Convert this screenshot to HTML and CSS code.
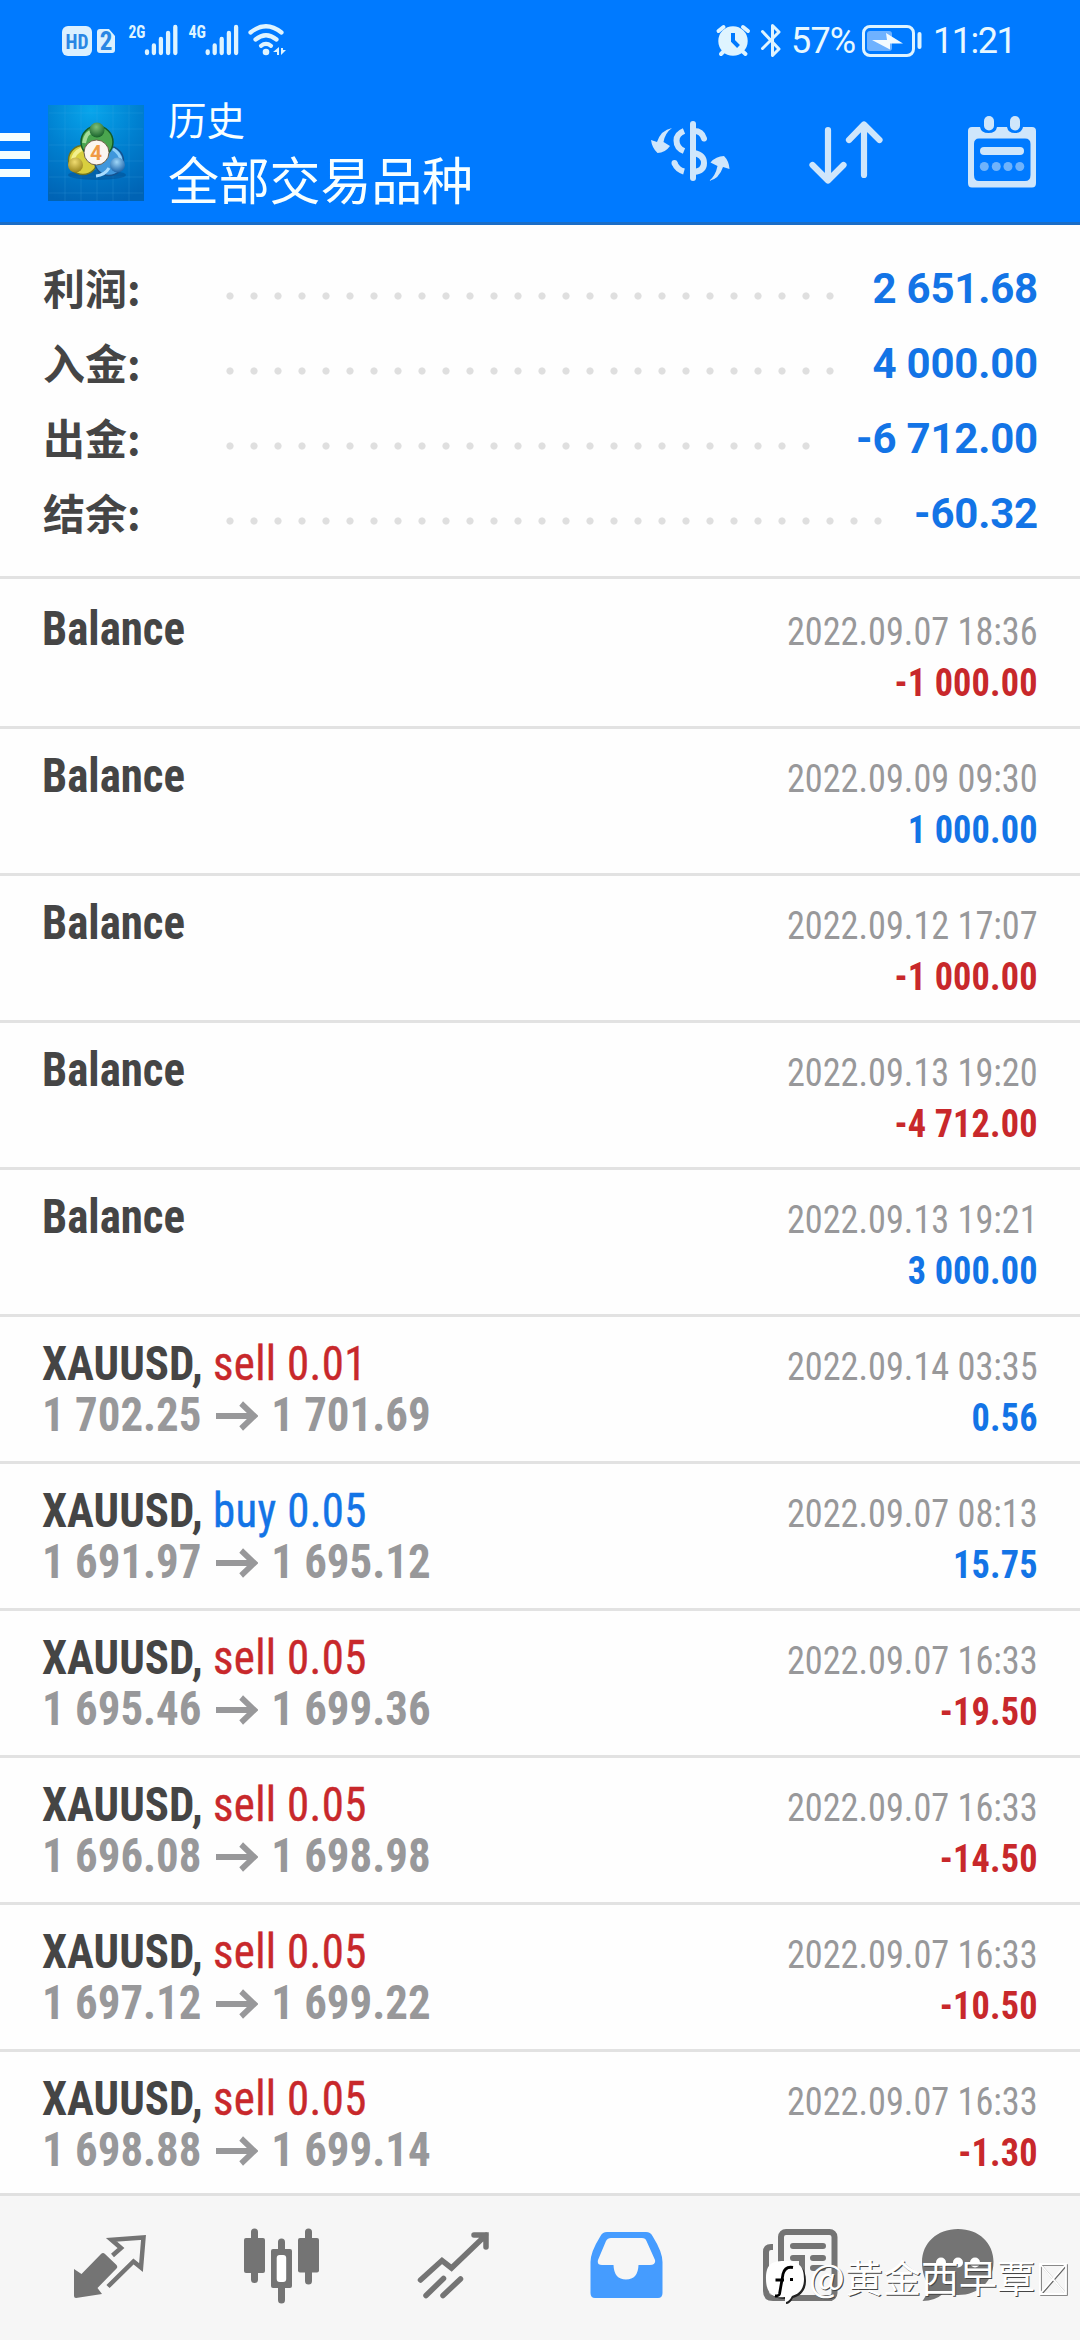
FILE: index.html
```html
<!DOCTYPE html>
<html lang="zh-CN">
<head>
<meta charset="utf-8">
<title>历史</title>
<link rel="stylesheet" href="styles.css">
</head>
<body>
<svg width="0" height="0" class="defs">
  <symbol id="arrow" viewBox="0 0 45 30"><path d="M0 15H41M27 2.500L41 15L27 27.500" fill="none" stroke="currentColor" stroke-width="6"/></symbol>
</svg>
<div class="screen">
  <header class="header">
    <div class="status">
      <svg class="status-left" width="240" height="40" viewBox="60 20 240 40">
        <rect x="62" y="26" width="30" height="30" rx="6" fill="#dbf0ff"/>
        <text x="77" y="48.500" class="badge-hd" text-anchor="middle" textLength="23" lengthAdjust="spacingAndGlyphs">HD</text>
        <path d="M100 29H109L115 36V50Q115 53 112 53H100Q97 53 97 50V32Q97 29 100 29Z" fill="#dbf0ff"/>
        <text x="106" y="49.500" class="badge-2" text-anchor="middle">2</text>
        <text x="128.500" y="38" class="net" textLength="17" lengthAdjust="spacingAndGlyphs">2G</text>
        <text x="188.500" y="38" class="net" textLength="17.500" lengthAdjust="spacingAndGlyphs">4G</text>
        <g stroke="#dff4ff" stroke-width="4.300" stroke-linecap="round">
          <path d="M147 51.500V53M153.900 45.500V53M160.900 39V53M168.100 33V53M175.300 27V53"/>
          <path d="M207.700 51.500V53M214.700 45.500V53M221.700 39V53M228.900 33V53M236.100 27V53"/>
        </g>
        <g fill="none" stroke="#dff4ff" stroke-width="4.200" stroke-linecap="round">
          <path d="M250.500 32.500Q266 20 281.500 32.500"/>
          <path d="M255.500 39.500Q266 31 276.500 39.500"/>
          <path d="M261 45.800Q266 42 271 45.800"/>
        </g>
        <circle cx="266" cy="52" r="3.300" fill="#dff4ff"/>
        <path d="M273 52L279 47V55H277V52ZM281 48V55L286 50H283V48Z" fill="#dff4ff"/>
      </svg>
      <div class="status-right">
        <svg width="79" height="40" viewBox="711 20 79 40">
          <circle cx="733" cy="41" r="14.700" fill="#dff4ff"/>
          <path d="M718.500 31L723.500 27M748 31L743 27M721 54L725 50M745.500 54L741 50" stroke="#dff4ff" stroke-width="4" stroke-linecap="round"/>
          <path d="M733 33V41L738.500 46.500" fill="none" stroke="#007aff" stroke-width="4"/>
          <path d="M762.500 31.500L779 49L772.500 55.500V25.500L779 32L762.500 48.500" fill="none" stroke="#dff4ff" stroke-width="3" stroke-linecap="round" stroke-linejoin="round"/>
        </svg>
        <span class="percent">57%</span>
        <svg width="62" height="40" viewBox="861 20 62 40">
          <rect x="863.500" y="26.500" width="50" height="29" rx="6.500" fill="none" stroke="#dff4ff" stroke-width="3"/>
          <rect x="867" y="31" width="25" height="20" rx="3" fill="#6fb2ff"/>
          <path d="M872 40L887 40L886 33L903 43.500H890V49.500Z" fill="#f4fbff"/>
          <path d="M919.500 34V47" stroke="#dff4ff" stroke-width="4" stroke-linecap="round"/>
        </svg>
        <span class="clock">11:21</span>
      </div>
    </div>
    <div class="toolbar">
      <div class="burger"><i></i><i></i><i></i></div>
      <svg class="logo" width="96" height="96" viewBox="0 0 96 96">
        <defs>
          <radialGradient id="bg" cx=".45" cy=".05" r="1"><stop offset="0" stop-color="#08a6ec"/><stop offset=".5" stop-color="#0080d0"/><stop offset="1" stop-color="#0063b4"/></radialGradient>
          <radialGradient id="gr" cx=".45" cy=".3" r=".7"><stop offset="0" stop-color="#7fc07a"/><stop offset="1" stop-color="#17622a"/></radialGradient>
          <radialGradient id="ye" cx=".45" cy=".3" r=".7"><stop offset="0" stop-color="#f0dc70"/><stop offset="1" stop-color="#98841a"/></radialGradient>
          <radialGradient id="bl" cx=".45" cy=".3" r=".7"><stop offset="0" stop-color="#9fd6f8"/><stop offset="1" stop-color="#1a63aa"/></radialGradient>
        </defs>
        <rect width="96" height="96" fill="url(#bg)"/>
        <path d="M1 8H95M1 24H95M1 40H95M1 56H95M1 72H95M1 88H95M17 0V96M33 0V96M49 0V96M65 0V96M81 0V96" stroke="#4fb4ea" stroke-opacity=".18"/>
        <ellipse cx="49" cy="70" rx="29" ry="5" fill="#003c78" opacity=".35"/>
        <circle cx="35" cy="55" r="14.500" fill="#d8cf3e" stroke="#6d7420" stroke-width="1.500"/>
        <circle cx="61" cy="56" r="14.500" fill="#3f97dc" stroke="#15528f" stroke-width="1.500"/>
        <path d="M48 71Q57 70 61 63" fill="none" stroke="#a8dcff" stroke-width="3"/>
        <path d="M25 56Q25 48 34 44" fill="none" stroke="#f3f08c" stroke-width="4"/>
        <circle cx="49" cy="37" r="16" fill="#4aa54e" stroke="#145c28" stroke-width="1.500"/>
        <path d="M36 38Q38 27 44 27" fill="none" stroke="#a5dc9a" stroke-width="4"/>
        <path d="M73 56Q72 48 65 44" fill="none" stroke="#8fd0fa" stroke-width="3"/>
        <circle cx="49" cy="25" r="7.500" fill="url(#gr)"/>
        <circle cx="27.500" cy="60" r="7.500" fill="url(#ye)"/>
        <circle cx="69.500" cy="60" r="7.500" fill="url(#bl)"/>
        <circle cx="48.500" cy="47.500" r="12.500" fill="#fbf5f0" stroke="#6d6048"/>
        <text x="48" y="55" class="logo-four" text-anchor="middle">4</text>
      </svg>
      <div class="titles">
        <div class="title-small">历史</div>
        <div class="title-big">全部交易品种</div>
      </div>
      <svg class="action" width="84" height="84" viewBox="648 110 84 84">
        <g fill="none" stroke="#cfe6fb" stroke-width="6">
          <path d="M693 124V178" stroke-linecap="round"/>
          <path d="M694 131Q702 131 704 138.500" stroke-linecap="round"/>
          <path d="M684 131Q676.500 134 676.500 140.500Q676.500 148 684 151"/>
          <path d="M674.500 163Q677 169.500 684 171.500"/>
          <path d="M694 153Q704 155 704 163Q704 171 694 172"/>
        </g>
        <circle cx="674.500" cy="163" r="3" fill="#cfe6fb"/>
        <path d="M672 128Q665 133 663.500 142L670 146Q665 153 657.500 153Q652 148 651 140L657 142Q661 130 672 128Z" fill="#cfe6fb"/>
        <path d="M709 181Q715.500 176 717.500 166L710.500 162.500Q716 156 724 156Q729 161 729.500 169L723 167Q719 179 709 181Z" fill="#cfe6fb"/>
      </svg>
      <svg class="action sort" width="84" height="84" viewBox="804 110 84 84">
        <path d="M828 130V180M812.500 165L828 180.500L843.500 165M864 175V125M849 140L864 124.500L879.500 140" fill="none" stroke="#cfe6fb" stroke-width="6.200" stroke-linecap="round" stroke-linejoin="round"/>
      </svg>
      <svg class="action calendar" width="84" height="84" viewBox="960 110 84 84">
        <path fill-rule="evenodd" d="M972 127H980Q981 133 988.500 133Q996 133 997 127H1007Q1008 133 1015 133Q1022 133 1023 127H1032Q1036 127 1036 131V183Q1036 187.500 1032 187.500H972Q968 187.500 968 183V131Q968 127 972 127ZM979 138.500Q974 138.500 974 144V175Q974 181 979 181H1025Q1030.500 181 1030.500 175V144Q1030.500 138.500 1025 138.500Z" fill="#cfe6fb"/>
        <rect x="984" y="116" width="10" height="14.500" rx="5" fill="#cfe6fb"/><rect x="1010" y="116" width="10" height="14.500" rx="5" fill="#cfe6fb"/>
        <rect x="980" y="147" width="44" height="8" rx="4" fill="#cfe6fb"/>
        <g fill="#6fb3fb"><circle cx="984.300" cy="166.500" r="4.500"/><circle cx="996.300" cy="166.500" r="4.500"/><circle cx="1008" cy="166.500" r="4.500"/><circle cx="1019.800" cy="166.500" r="4.500"/></g>
      </svg>
    </div>
  </header>

  <section class="summary">
    <div class="sum-row"><span class="sum-label">利润:</span><span class="dots" style="width:624px"></span><span class="sum-value">2 651.68</span></div>
    <div class="sum-row"><span class="sum-label">入金:</span><span class="dots" style="width:624px"></span><span class="sum-value">4 000.00</span></div>
    <div class="sum-row"><span class="sum-label">出金:</span><span class="dots" style="width:600px"></span><span class="sum-value">-6 712.00</span></div>
    <div class="sum-row"><span class="sum-label">结余:</span><span class="dots" style="width:672px"></span><span class="sum-value">-60.32</span></div>
  </section>

  <main class="deals">
    <div class="deal"><div class="left"><div>Balance</div></div><div class="right"><div class="date">2022.09.07 18:36</div><div class="amount neg">-1 000.00</div></div></div>
    <div class="deal"><div class="left"><div>Balance</div></div><div class="right"><div class="date">2022.09.09 09:30</div><div class="amount pos">1 000.00</div></div></div>
    <div class="deal"><div class="left"><div>Balance</div></div><div class="right"><div class="date">2022.09.12 17:07</div><div class="amount neg">-1 000.00</div></div></div>
    <div class="deal"><div class="left"><div>Balance</div></div><div class="right"><div class="date">2022.09.13 19:20</div><div class="amount neg">-4 712.00</div></div></div>
    <div class="deal"><div class="left"><div>Balance</div></div><div class="right"><div class="date">2022.09.13 19:21</div><div class="amount pos">3 000.00</div></div></div>
    <div class="deal"><div class="left"><div>XAUUSD, <span class="side neg">sell 0.01</span></div><div class="price">1 702.25<svg class="arrow"><use href="#arrow"/></svg>1 701.69</div></div><div class="right"><div class="date">2022.09.14 03:35</div><div class="amount pos">0.56</div></div></div>
    <div class="deal"><div class="left"><div>XAUUSD, <span class="side pos">buy 0.05</span></div><div class="price">1 691.97<svg class="arrow"><use href="#arrow"/></svg>1 695.12</div></div><div class="right"><div class="date">2022.09.07 08:13</div><div class="amount pos">15.75</div></div></div>
    <div class="deal"><div class="left"><div>XAUUSD, <span class="side neg">sell 0.05</span></div><div class="price">1 695.46<svg class="arrow"><use href="#arrow"/></svg>1 699.36</div></div><div class="right"><div class="date">2022.09.07 16:33</div><div class="amount neg">-19.50</div></div></div>
    <div class="deal"><div class="left"><div>XAUUSD, <span class="side neg">sell 0.05</span></div><div class="price">1 696.08<svg class="arrow"><use href="#arrow"/></svg>1 698.98</div></div><div class="right"><div class="date">2022.09.07 16:33</div><div class="amount neg">-14.50</div></div></div>
    <div class="deal"><div class="left"><div>XAUUSD, <span class="side neg">sell 0.05</span></div><div class="price">1 697.12<svg class="arrow"><use href="#arrow"/></svg>1 699.22</div></div><div class="right"><div class="date">2022.09.07 16:33</div><div class="amount neg">-10.50</div></div></div>
    <div class="deal"><div class="left"><div>XAUUSD, <span class="side neg">sell 0.05</span></div><div class="price">1 698.88<svg class="arrow"><use href="#arrow"/></svg>1 699.14</div></div><div class="right"><div class="date">2022.09.07 16:33</div><div class="amount neg">-1.30</div></div></div>
  </main>

  <nav class="tabs">
    <svg viewBox="24 2196 172 144">
      <path d="M74 2269L81.500 2274L101 2254Q103 2252 105 2254L116.500 2265Q118 2267 116.500 2268.500L97.500 2288L102 2294L76 2298Q74 2298 74 2296Z" fill="#747474"/>
      <path d="M112.500 2255.500L121 2248L111.500 2239.800L143.500 2237.500L141 2267.500L133.500 2261.500L108 2286.500" fill="none" stroke="#747474" stroke-width="4.500"/>
    </svg>
    <svg viewBox="196 2196 172 144">
      <path d="M254.500 2232V2279.500M281.500 2242V2300M308.500 2232V2281" stroke="#747474" stroke-width="7" stroke-linecap="round"/>
      <g fill="#747474"><rect x="244" y="2238" width="21" height="35" rx="2"/><rect x="298" y="2238" width="21" height="34.500" rx="2"/><rect x="271" y="2249" width="21" height="39" rx="2"/></g>
      <rect x="276.700" y="2255" width="9.500" height="27" rx="3" fill="#fff"/>
    </svg>
    <svg viewBox="368 2196 172 144">
      <path d="M420.500 2280L442 2260.500L451.500 2268L486 2235M474 2235H486V2247M426 2295.500L443.500 2278.500M443 2295.500L460.500 2279" fill="none" stroke="#747474" stroke-width="5.500" stroke-linecap="round" stroke-linejoin="miter"/>
    </svg>
    <svg viewBox="540 2196 172 144">
      <path fill-rule="evenodd" d="M607 2232H646Q650.500 2232 652.500 2236Q662.500 2252 662.500 2262V2293Q662.500 2298 658 2298H595Q590.500 2298 590.500 2293V2262Q590.500 2252 600.500 2236Q602.500 2232 607 2232ZM611 2238Q607.500 2238 606 2241L598 2260Q596.800 2265 602 2265H613.500Q614 2279.500 626 2279.500Q638 2279.500 638.500 2265H650Q656 2265 655 2260L646.500 2241Q645.500 2238 642 2238Z" fill="#459cff"/>
    </svg>
    <svg viewBox="712 2196 172 144">
      <rect x="781" y="2232" width="53.500" height="66" rx="5" fill="none" stroke="#747474" stroke-width="6"/>
      <path d="M773 2247H771Q766 2247 766 2252V2291Q766 2298 773 2298H832" fill="none" stroke="#747474" stroke-width="6"/>
      <path d="M793 2246H823M793 2258H802V2280M813 2258H823M813 2268H823" fill="none" stroke="#747474" stroke-width="6" stroke-linecap="round"/>
    </svg>
    <svg viewBox="884 2196 172 144">
      <path d="M958 2229C979 2229 993.500 2243 993.500 2262C993.500 2281 979 2295 958 2295C953 2295 948 2294.500 944 2293Q935 2301 922.500 2301Q927 2295 929 2286C925 2280 922 2272 922 2262C922 2243 937 2229 958 2229Z" fill="#747474"/>
      <g fill="#fff"><circle cx="941" cy="2262.500" r="5"/><circle cx="958" cy="2262.500" r="5"/><circle cx="975" cy="2262.500" r="5"/></g>
    </svg>
  </nav>

  <div class="watermark">
    <svg width="44" height="46" viewBox="764 2258 44 46">
      <path d="M786 2263C800 2263 806 2268 806 2281C806 2290 801 2296 793 2298Q790 2304 786 2304V2299C773 2299 767 2293 767 2281C767 2268 773 2263 786 2263Z" fill="#222"/>
      <path d="M784 2261C799 2261 804 2266 804 2279C804 2289 799 2294 792 2296Q789 2302 785 2302V2297C772 2299 766 2292 766 2279C766 2266 770 2261 784 2261Z" fill="#fff"/>
      <path d="M793 2267.500Q785 2266 783 2274L779.500 2294Q779 2296 775 2296M775.500 2280H784M790 2279.500H793" fill="none" stroke="#000" stroke-width="2.800"/>
    </svg>
    <span class="wm-text">@黄金西早覃</span>
    <svg class="wm-box" width="31" height="34" viewBox="0 0 31 34"><path d="M3 3H29V33H3ZM3 3L29 33M29 3L3 33" fill="none" stroke="#666" stroke-width="1.500"/><path d="M2 2H28V32H2ZM2 2L28 32M28 2L2 32" fill="none" stroke="#fff" stroke-width="1.800"/></svg>
  </div>
</div>
</body>
</html>
```
FILE: styles.css
```css
* { box-sizing: border-box; }
body { margin: 0; background: #fff; font-family: "Roboto Condensed", Roboto, "Noto Sans CJK SC", sans-serif; }
.defs { position: absolute; }
svg { display: block; flex: none; }
.screen { position: relative; width: 1080px; height: 2340px; display: flex; flex-direction: column; overflow: hidden; background: #fefefe; }

.header { height: 225px; background: #007aff; border-bottom: 3px solid #1a6dc6; color: #f8ffff; }
.status { height: 84px; padding: 20px 60px 0; display: flex; align-items: flex-start; }
.status-right { margin-left: auto; display: flex; width: 309px; height: 42px; font: 400 36px/43px Roboto, sans-serif; color: #e8f8ff; }
.percent { width: 71px; padding-left: 1px; letter-spacing: -0.8px; }
.clock { margin-left: 10px; letter-spacing: -1.500px; white-space: nowrap; }
.badge-hd { font: 700 21px "Roboto Condensed", sans-serif; fill: #2a86e4; }
.badge-2 { font: 700 25px "Roboto Condensed", sans-serif; fill: #2a86e4; }
.net { font: 700 19px "Roboto Condensed", sans-serif; fill: #dff4ff; }

.toolbar { height: 138px; display: flex; align-items: flex-start; }
.burger { width: 30px; margin-top: 49px; display: flex; flex-direction: column; gap: 10px; }
.burger i { height: 8px; background: #f4feff; }
.logo { margin: 21px 0 0 18px; }
.logo-four { font: 700 21px Roboto, sans-serif; fill: #f09a45; }
.titles { margin: 11px 0 0 24px; width: 479px; font-family: "Noto Sans CJK SC", sans-serif; }
.title-small { font-size: 38.500px; line-height: 46px; }
.title-big { font-size: 51px; line-height: 74px; letter-spacing: -0.2px; }
.action { margin-top: 26px; margin-left: 1px; }
.sort, .calendar { margin-left: 72px; }

.summary { height: 354px; padding: 27px 42px 0 43px; border-bottom: 3px solid #e2e2e2; }
.sum-row { height: 75px; display: flex; align-items: center; }
.sum-label { width: 183px; height: 75px; font: 700 42px/69px "Noto Sans CJK SC", sans-serif; color: #454545; }
.dots { height: 8px; margin-top: 13px; background: radial-gradient(circle at 4px 4px, #dfdfdf 3.200px, transparent 4px) 0 0 / 24px 8px; }
.sum-value { height: 75px; margin-left: auto; font: 700 42px/73px Roboto, sans-serif; color: #1374e6; letter-spacing: -0.2px; }

.deals { height: 1614px; overflow: hidden; }
.deal { height: 147px; padding: 0 42px; display: flex; justify-content: space-between; border-bottom: 3px solid #e2e2e2; white-space: nowrap; }
.deal:first-child { height: 150px; padding-top: 3px; }
.deal:last-child { border-bottom: 0; }
.left { padding-top: 21px; font-size: 48px; line-height: 51px; font-weight: 700; color: #454545; transform: scaleX(.935); transform-origin: left; }
.right { padding-top: 25px; font-size: 39px; line-height: 51px; text-align: right; transform: scaleX(.93); transform-origin: right; }
.side { font-weight: 400; letter-spacing: 0.350px; -webkit-text-stroke: 0.400px currentColor; }
.price { display: flex; align-items: center; color: #98989a; }
.arrow { width: 45px; height: 30px; margin: 3px 14.500px 0 15px; }
.date { color: #98989a; font-weight: 400; }
.amount { font-weight: 700; letter-spacing: 0.150px; }
.neg { color: #c8282b; }
.pos { color: #1374e6; }

.tabs { height: 147px; padding: 0 24px; display: flex; background: #f6f6f6; border-top: 3px solid #e0e0e0; }
.tabs svg { width: 172px; height: 144px; }

.watermark { position: absolute; left: 764px; top: 2258px; height: 46px; display: flex; align-items: center; }
.wm-text { height: 46px; margin-left: 1px; font: 400 38px/36px "Noto Sans CJK SC", sans-serif; color: #fff; text-shadow: 1px 1px 0 #444; white-space: nowrap; }
.wm-box { margin: -4px 0 0 3px; }
```
